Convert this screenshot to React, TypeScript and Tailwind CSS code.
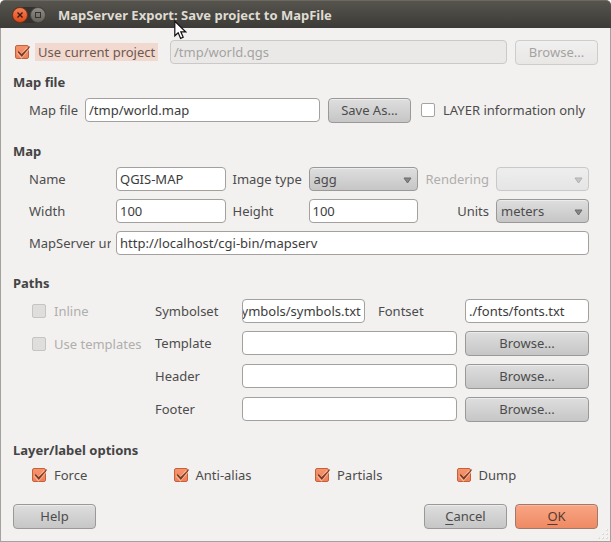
import { useEffect, useRef, useState } from "react";
import type { ReactNode } from "react";

const fieldClass =
  "block h-6 w-full min-w-0 rounded-[4px] border border-[#a3a09d] bg-white px-[3px] text-[#3c3c3c] outline-none disabled:border-[#cbc9c7] disabled:bg-[#eae9e8] disabled:text-[#a5a3a1]";

const buttonClass =
  "block h-[25px] rounded-[4px] border border-[#9a9998] bg-linear-to-b from-[#dedede] to-[#c6c6c6] pb-0.5 text-center text-[#4c4c4c] shadow-[inset_0_1px_0_#ececec] disabled:border-[#cfcdcb] disabled:from-[#f1f0f0] disabled:to-[#e8e7e6] disabled:text-[#a5a3a1] disabled:shadow-none";

function Heading({ children, className = "mt-[18px]" }: { children: ReactNode; className?: string }) {
  return <h2 className={`${className} mb-1.5 h-5 font-bold leading-5 text-[#444]`}>{children}</h2>;
}

function Check({
  label,
  checked = false,
  disabled = false,
  highlight = false,
}: {
  label: string;
  checked?: boolean;
  disabled?: boolean;
  highlight?: boolean;
}) {
  const [on, setOn] = useState(checked);
  return (
    <label className={`flex items-center whitespace-nowrap ${disabled ? "text-[#b0aeac]" : "text-[#4c4c4c]"}`}>
      <span className="relative block size-[14px] shrink-0">
        <input
          type="checkbox"
          checked={on}
          disabled={disabled}
          onChange={(e) => setOn(e.target.checked)}
          className="block size-[14px] appearance-none rounded-[2px] border border-[#a5a3a0] bg-white checked:border-[#c4603c] checked:bg-linear-to-b checked:from-[#f6946c] checked:to-[#ef8057] disabled:border-[#c6c4c2] disabled:bg-[#dfdedd]"
        />
        {on && (
          <svg viewBox="0 0 16 15" className="pointer-events-none absolute left-0 top-0 h-[15px] w-4" aria-hidden="true">
            <path d="M3 7 L6.4 11 L13 3.4" fill="none" stroke="#fbb599" strokeWidth="3.6" />
            <path d="M3.6 5.8 L6.6 9 L14.8 1.2 L15.2 1.8 L6.8 11.9 L2.8 7.4 Z" fill="#7a3c26" />
          </svg>
        )}
      </span>
      <span className={highlight ? "ml-1.5 bg-[#f1d9cf] px-[3px] leading-[18px] text-[#6e5850]" : "ml-2"}>{label}</span>
    </label>
  );
}

function Dropdown({ id, options, disabled = false }: { id: string; options: string[]; disabled?: boolean }) {
  return (
    <div className="relative min-w-0">
      <select
        id={id}
        disabled={disabled}
        className="block h-6 w-full appearance-none rounded-[4px] border border-[#9a9998] bg-linear-to-b from-[#dedede] to-[#c6c6c6] pl-1 pr-5 text-[#4c4c4c] opacity-100 shadow-[inset_0_1px_0_#ececec] disabled:border-[#cbc9c7] disabled:from-[#efeeee] disabled:to-[#e6e5e5] disabled:shadow-none"
      >
        {options.map((o) => (
          <option key={o}>{o}</option>
        ))}
      </select>
      <svg viewBox="0 0 9 7" className="pointer-events-none absolute right-1.5 top-2.5 h-[7px] w-[9px]" aria-hidden="true">
        <path d="M1 1 H8 L4.5 6 Z" fill={disabled ? "#c8c7c6" : "#888"} stroke={disabled ? "#b0b0b0" : "#6a6a6a"} />
      </svg>
    </div>
  );
}

function TitleBar() {
  return (
    <header className="flex h-7 items-center rounded-t-[5px] border-t border-[#6a6862] bg-linear-to-b from-[#56544d] to-[#3c3b37] pl-3">
      <div className="flex items-center gap-0.5 rounded-full bg-[#33322e]">
        <button type="button" aria-label="Close" className="size-4 rounded-full border border-[#7d3415] bg-linear-to-b from-[#f58055] to-[#dd4814]">
          <svg viewBox="0 0 14 14" className="block size-3.5" aria-hidden="true">
            <path d="M4.5 4.5 L9.5 9.5 M9.5 4.5 L4.5 9.5" stroke="#3b1b10" strokeWidth="1.4" />
          </svg>
        </button>
        <button type="button" aria-label="Maximize" className="size-4 rounded-full border border-[#4a4944] bg-linear-to-b from-[#8e8c84] to-[#66645d]">
          <svg viewBox="0 0 14 14" className="block size-3.5" aria-hidden="true">
            <rect x="4.5" y="4.5" width="5" height="5" fill="none" stroke="#33322e" />
          </svg>
        </button>
      </div>
      <h1 className="ml-3 whitespace-nowrap font-bold text-[#dfdbd2]">MapServer Export: Save project to MapFile</h1>
    </header>
  );
}

function PathRow({ id, label }: { id: string; label: string }) {
  return (
    <>
      <label htmlFor={id} className="col-start-2 self-start leading-6">{label}</label>
      <input id={id} className={`${fieldClass} col-span-2 self-start`} />
      <button type="button" className={`${buttonClass} ml-2`}>Browse...</button>
    </>
  );
}

export default function App() {
  const symbolset = useRef<HTMLInputElement>(null);

  // Keep the end of the long path in view.
  useEffect(() => {
    const el = symbolset.current;
    if (el) el.scrollLeft = el.scrollWidth;
  }, []);

  return (
    <div className="relative bg-white font-['Noto_Sans','Open_Sans',sans-serif] text-[13px] leading-[18px] text-[#4c4c4c]">
      <TitleBar />
      <main className="border-x border-b border-[#a5a19e] bg-[#f2f1f0] px-3 pb-3 pt-3">
        <div className="flex items-start">
          <div className="flex h-6 w-[157px] shrink-0 items-center pl-0.5">
            <Check label="Use current project" checked highlight />
          </div>
          <input aria-label="Project file" disabled defaultValue="/tmp/world.qgs" className={`${fieldClass} flex-1`} />
          <button type="button" disabled className={`${buttonClass} ml-2 w-[83px]`}>Browse...</button>
        </div>

        <Heading className="mt-[7px]">Map file</Heading>
        <div className="flex items-start pl-4 pr-3">
          <label htmlFor="mapfile" className="w-14 shrink-0 leading-6">Map file</label>
          <input id="mapfile" defaultValue="/tmp/world.map" className={`${fieldClass} flex-1`} />
          <button type="button" className={`${buttonClass} ml-2 w-[83px] shrink-0`}>Save As...</button>
          <div className="ml-2.5 flex h-6 w-[165px] shrink-0 items-center">
            <Check label="LAYER information only" />
          </div>
        </div>

        <Heading>Map</Heading>
        <div className="grid grid-cols-[80px_1fr_69px_1fr_64px_93px] items-center gap-x-[7px] gap-y-2 pl-4 pr-[9px]">
          <label htmlFor="name">Name</label>
          <input id="name" defaultValue="QGIS-MAP" className={fieldClass} />
          <label htmlFor="imagetype" className="whitespace-nowrap">Image type</label>
          <Dropdown id="imagetype" options={["agg", "gd"]} />
          <label htmlFor="rendering" className="text-right text-[#b0aeac]">Rendering</label>
          <Dropdown id="rendering" options={[""]} disabled />

          <label htmlFor="width">Width</label>
          <input id="width" defaultValue="100" className={fieldClass} />
          <label htmlFor="height">Height</label>
          <input id="height" defaultValue="100" className={fieldClass} />
          <label htmlFor="units" className="text-right">Units</label>
          <Dropdown id="units" options={["meters", "feet", "dd"]} />

          <label htmlFor="url" className="-mr-0.5 overflow-hidden whitespace-nowrap">MapServer url</label>
          <input id="url" defaultValue="http://localhost/cgi-bin/mapserv" className={`${fieldClass} col-span-5`} />
        </div>

        <Heading>Paths</Heading>
        <div className="grid grid-cols-[123px_87px_1fr_92px_132px] items-center gap-y-2 pl-[19px] pr-[9px]">
          <Check label="Inline" disabled />
          <label htmlFor="symbolset">Symbolset</label>
          <input id="symbolset" ref={symbolset} defaultValue="./symbols/symbols.txt" className={`${fieldClass} pl-0`} />
          <label htmlFor="fontset" className="pl-[13px]">Fontset</label>
          <div className="pl-2">
            <input id="fontset" defaultValue="./fonts/fonts.txt" className={fieldClass} />
          </div>

          <Check label="Use templates" disabled />
          <PathRow id="template" label="Template" />
          <PathRow id="header" label="Header" />
          <PathRow id="footer" label="Footer" />
        </div>

        <Heading>Layer/label options</Heading>
        <div className="grid grid-cols-4 pl-[19px]">
          <Check label="Force" checked />
          <Check label="Anti-alias" checked />
          <Check label="Partials" checked />
          <Check label="Dump" checked />
        </div>

        <footer className="mt-5 flex gap-2">
          <button type="button" className={`${buttonClass} mr-auto w-[83px]`}>Help</button>
          <button type="button" className={`${buttonClass} w-[83px]`}>
            <span className="underline underline-offset-3">C</span>ancel
          </button>
          <button
            type="button"
            className="h-[25px] w-[83px] rounded-[4px] border border-[#a0796a] bg-linear-to-b from-[#f9a585] to-[#ee8a63] pb-0.5 text-center text-[#5a3a2e] shadow-[inset_0_1px_0_#fbb79d]"
          >
            <span className="underline underline-offset-3">O</span>K
          </button>
        </footer>
      </main>
      <svg viewBox="0 0 12 12" className="pointer-events-none absolute bottom-0.5 right-0.5 size-3" aria-hidden="true">
        <path d="M9 1h2v2h-2zM5 5h2v2h-2zM9 5h2v2h-2zM1 9h2v2h-2zM5 9h2v2h-2zM9 9h2v2h-2z" fill="#dddbd9" />
        <path d="M9 1h1v1h-1zM5 5h1v1h-1zM9 5h1v1h-1zM1 9h1v1h-1zM5 9h1v1h-1zM9 9h1v1h-1z" fill="#fff" />
      </svg>
      <svg viewBox="0 0 13 20" className="pointer-events-none absolute left-[174px] top-5 h-5 w-[13px]" aria-hidden="true">
        <path d="M0.8 1.2 V15.8 L4.2 12.8 L6.6 18.4 L9.2 17.3 L6.8 11.8 H11.6 Z" fill="#fff" stroke="#111" strokeWidth="1.2" />
      </svg>
    </div>
  );
}
